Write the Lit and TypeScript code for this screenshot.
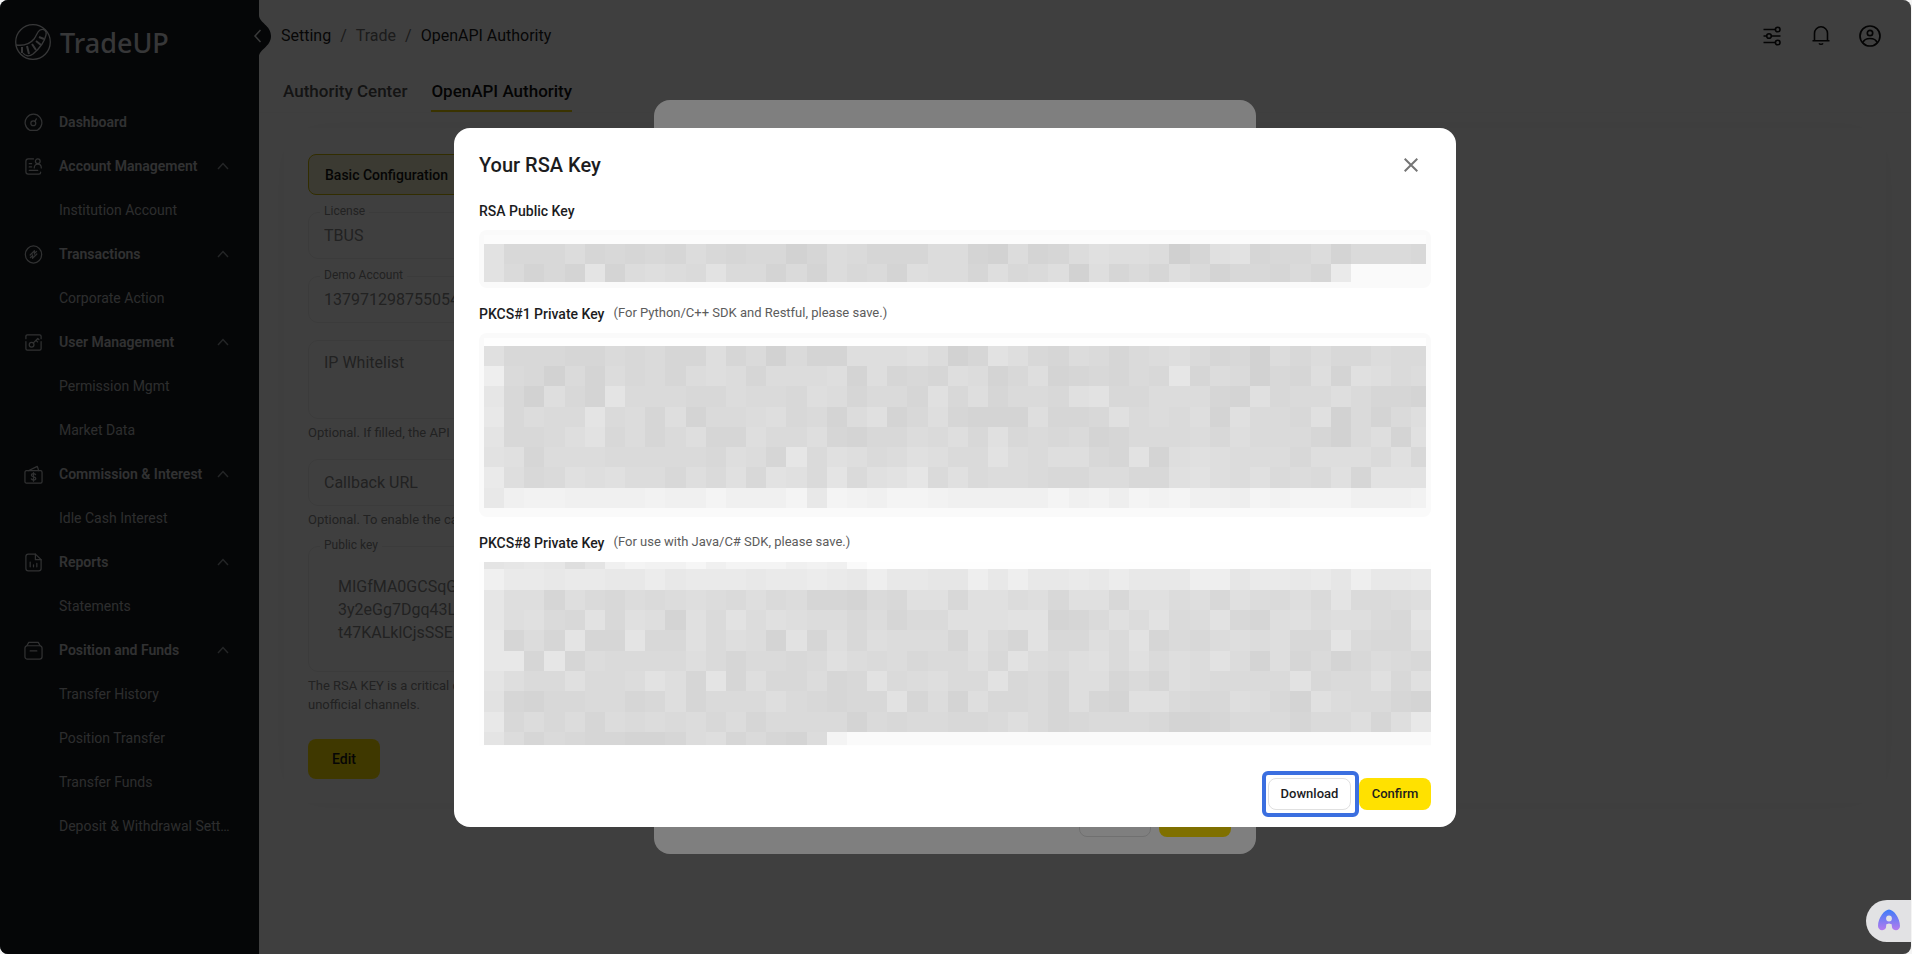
import { LitElement, html, css, svg, nothing } from "lit";
import { customElement, property } from "lit/decorators.js";

const sharedStyles = css`
  *,
  *::before,
  *::after {
    box-sizing: border-box;
  }
  button,
  input,
  textarea {
    font: inherit;
    color: inherit;
    margin: 0;
  }
  a {
    color: inherit;
    text-decoration: none;
  }
`;

const strokeIcon = (size: number, shape: unknown) => html`
  <svg
    width=${size}
    height=${size}
    viewBox="0 0 20 20"
    fill="none"
    stroke="currentColor"
    stroke-width="1.3"
    stroke-linecap="round"
    stroke-linejoin="round"
    aria-hidden="true"
  >
    ${shape}
  </svg>
`;

const glyphs: Record<string, unknown> = {
  dashboard: svg`<path d="M6 18.2A8.8 9 0 1 1 14 18.2Z"/><circle cx="9.8" cy="10.8" r="2.6"/><path d="M11.5 8.8 13 6.2"/>`,
  account: svg`<path d="M10 2H4.5A2.5 2.5 0 0 0 2 4.5v11A2.5 2.5 0 0 0 4.5 18h11a2 2 0 0 0 2-2"/><circle cx="14.5" cy="4.5" r="2.5"/><path d="M10.8 11.5c0-2.6 1.5-4 3.7-4s3.7 1.4 3.7 4M5.5 7H8M5.5 10.5H8M5.5 14h9"/>`,
  transactions: svg`<ellipse cx="10" cy="10" rx="8.6" ry="9"/><path d="M6.5 10.5 11 6v3.5M13.5 9.5 9 14v-3.5M6.8 13.3l1.4-1.4M13.2 6.7l-1.4 1.4"/>`,
  user: svg`<path d="M2 6V3.5C2 2.6 2.6 2 3.5 2h13c.9 0 1.5.6 1.5 1.5V6M2 9v7.5c0 .9.6 1.5 1.5 1.5h13c.9 0 1.5-.6 1.5-1.5V9"/><circle cx="8" cy="12.3" r="2.5"/><path d="m9.9 10.4 4.6-4.6M12.6 7.7l1.7 1.7M14.5 5.8l1.2 1.2"/>`,
  commission: svg`<rect x="1" y="6" width="18" height="13" rx="1.5"/><path d="M4.5 6 14 1.5 15.5 6"/><path d="M12.2 10.2c-.4-.7-1.2-1-2.2-1-1.2 0-2.2.6-2.2 1.6 0 2.3 4.6 1.1 4.6 3.4 0 1-1 1.6-2.3 1.6-1.1 0-2-.4-2.4-1.2M10 8v9"/>`,
  reports: svg`<path d="M12 1.2H4.5A2.5 2.5 0 0 0 2 3.7v12.6a2.5 2.5 0 0 0 2.5 2.5h11a2.5 2.5 0 0 0 2.5-2.5V7Z"/><path d="M12 1.2V7h6M6.5 9.5v5M10 12.5v2M13.5 11v3.5"/>`,
  funds: svg`<rect x="1" y="5" width="18" height="14" rx="2.5"/><path d="M3 5l2-3.5h10L17 5M6.5 10.5h7"/>`,
};

interface NavGroup {
  label: string;
  icon: string;
  children: string[];
}

const navGroups: NavGroup[] = [
  { label: "Dashboard", icon: "dashboard", children: [] },
  { label: "Account Management", icon: "account", children: ["Institution Account"] },
  { label: "Transactions", icon: "transactions", children: ["Corporate Action"] },
  { label: "User Management", icon: "user", children: ["Permission Mgmt", "Market Data"] },
  { label: "Commission & Interest", icon: "commission", children: ["Idle Cash Interest"] },
  { label: "Reports", icon: "reports", children: ["Statements"] },
  {
    label: "Position and Funds",
    icon: "funds",
    children: [
      "Transfer History",
      "Position Transfer",
      "Transfer Funds",
      "Deposit & Withdrawal Sett…",
    ],
  },
];

@customElement("side-nav")
export class SideNav extends LitElement {
  static styles = [
    sharedStyles,
    css`
      :host {
        display: flex;
        flex-direction: column;
        position: relative;
        flex: 0 0 259px;
        min-width: 0;
        background: #14191e;
        color: #c4c6c8;
      }
      .logo {
        display: flex;
        align-items: center;
        gap: 8px;
        height: 100px;
        padding: 0 0 16px 15px;
        color: #dcdee0;
      }
      .wordmark {
        padding-top: 2px;
        font: 500 27px/36px "Noto Sans", sans-serif;
      }
      .row {
        display: flex;
        align-items: center;
        width: 100%;
        height: 44px;
        padding: 0 24px;
        border: 0;
        background: none;
        font-size: 14px;
        line-height: 20px;
        text-align: left;
      }
      .group {
        gap: 16px;
        font-weight: 600;
      }
      .group svg {
        flex: none;
      }
      .text {
        flex: 1;
        white-space: nowrap;
      }
      .child {
        padding-left: 59px;
        color: #b4b6b8;
      }
      .group .chevron {
        color: #92969a;
        margin: 0 6px 0 -16px;
      }
      .collapse {
        position: absolute;
        left: 250px;
        top: 15px;
        width: 22px;
        height: 42px;
        padding: 0;
        border: 0;
        background: none;
        color: #e8e8e8;
      }
      .collapse svg {
        display: block;
      }
    `,
  ];

  render() {
    return html`
      <div class="logo">
        <svg width="37" height="38" viewBox="0 0 37 38" fill="none" stroke="currentColor" stroke-width="1.3" aria-hidden="true">
          <circle cx="18" cy="19" r="17.3" />
          <path d="M1 22c8 1 14-1 18-6 3-4 3-7 6-9 4-2 7 1 6 5-2 9-7 14-13 19-4 3-8 2-10-1" />
          <path d="M24 14l5 2M21 18l5 4M17 21l4 6M12 23l2 8M7 24v6" stroke-width="2" />
        </svg>
        <span class="wordmark">TradeUP</span>
      </div>
      <nav aria-label="Main">
        ${navGroups.map(
          (group) => html`
            <button class="row group" type="button">
              ${strokeIcon(19, glyphs[group.icon])}
              <span class="text">${group.label}</span>
              ${group.children.length
                ? html`<svg class="chevron" width="12" height="12" viewBox="0 0 12 12" fill="none" stroke="currentColor" stroke-width="1.4" aria-hidden="true">
                    <path d="M1 9l5-5.5L11 9" />
                  </svg>`
                : nothing}
            </button>
            ${group.children.map(
              (child) => html`<a class="row child" href="#"><span class="text">${child}</span></a>`,
            )}
          `,
        )}
      </nav>
      <button class="collapse" type="button" aria-label="Collapse menu">
        <svg width="22" height="42" viewBox="0 0 22 42" aria-hidden="true">
          <path d="M9 0c0 8 12 10 12 21S9 34 9 42Z" fill="#14191e" />
          <path d="M10.5 15 5 21l5.5 6" fill="none" stroke="currentColor" stroke-width="1.5" />
        </svg>
      </button>
    `;
  }
}

@customElement("page-header")
export class PageHeader extends LitElement {
  static styles = [
    sharedStyles,
    css`
      :host {
        display: block;
        border-bottom: 1px solid #fafafa;
        color: #1c1c1c;
      }
      .top {
        display: flex;
        justify-content: space-between;
        align-items: center;
        height: 72px;
        padding: 0 29px 0 22px;
        font-size: 16px;
        line-height: 24px;
      }
      .crumbs {
        display: flex;
        gap: 9px;
      }
      .dim {
        color: #707070;
      }
      .actions {
        display: flex;
        gap: 25px;
      }
      .actions button {
        display: flex;
        padding: 0;
        border: 0;
        background: none;
      }
      .tabs {
        display: flex;
        gap: 24px;
        padding: 0 24px;
      }
      .tab {
        height: 40px;
        padding: 7px 0 0;
        border-bottom: 2px solid transparent;
        font-size: 17px;
        line-height: 24px;
        font-weight: 500;
        color: #505050;
      }
      .tab.active {
        color: #101010;
        border-color: #e8cc00;
      }
    `,
  ];

  render() {
    return html`
      <div class="top">
        <div class="crumbs">
          <a href="#">Setting</a><span class="dim">/</span><a class="dim" href="#">Trade</a
          ><span class="dim">/</span><span>OpenAPI Authority</span>
        </div>
        <div class="actions">
          <button type="button" aria-label="Preferences">
            <svg width="24" height="24" viewBox="0 0 24 24" fill="none" stroke="#101010" stroke-width="1.6" aria-hidden="true">
              <path d="M3.5 5.5h12M3.5 12h3M11 12h9.5M3.5 18.5h12" />
              <circle cx="17.7" cy="5.5" r="2.3" /><circle cx="9" cy="12" r="2.3" /><circle cx="17.7" cy="18.5" r="2.3" />
            </svg>
          </button>
          <button type="button" aria-label="Notifications">
            <svg width="24" height="24" viewBox="0 0 24 24" fill="none" stroke="#101010" stroke-width="1.6" aria-hidden="true">
              <path d="M3.5 16.8h17M5.5 16.8V9.3a6.5 6.5 0 0 1 13 0v7.5M10 19.3c.8 1.3 3.2 1.3 4 0" />
            </svg>
          </button>
          <button type="button" aria-label="Profile">
            <svg width="24" height="24" viewBox="0 0 24 24" fill="none" stroke="#101010" stroke-width="1.7" aria-hidden="true">
              <circle cx="12" cy="12" r="10" /><circle cx="12" cy="9" r="2.7" />
              <path d="M5 18.5c1-3 4-4 7-4s6 1 7 4" />
            </svg>
          </button>
        </div>
      </div>
      <div class="tabs">
        <a class="tab" href="#">Authority Center</a>
        <a class="tab active" href="#" aria-current="page">OpenAPI Authority</a>
      </div>
    `;
  }
}

@customElement("config-form")
export class ConfigForm extends LitElement {
  static styles = [
    sharedStyles,
    css`
      :host {
        display: block;
        margin: 15px 25px 0;
        padding: 26px 24px 24px;
        border-radius: 24px;
        background: #fff;
        box-shadow: 0 0 44px rgba(0, 0, 0, 0.04);
        font-size: 16px;
        line-height: 23px;
        color: #888;
      }
      .section {
        display: block;
        height: 41px;
        padding: 0 16px;
        border: 1px solid #c8b400;
        border-radius: 8px;
        background: #ecebc8;
        color: #141414;
        font-size: 14px;
        line-height: 20px;
        font-weight: 500;
      }
      .field {
        position: relative;
        display: flex;
        margin-top: 17px;
        border: 1px solid #ececec;
        border-radius: 10px;
        max-width: 920px;
      }
      .field label {
        position: absolute;
        top: -11px;
        left: 11px;
        padding: 0 4px;
        background: #fff;
        font-size: 12px;
        line-height: 18px;
      }
      input,
      textarea {
        display: block;
        flex: 1;
        min-width: 0;
        height: 45px;
        padding: 0 15px 1px;
        border: 0;
        outline: 0;
        resize: none;
        overflow: hidden;
        background: none;
      }
      ::placeholder {
        color: #888;
        opacity: 1;
      }
      .whitelist {
        height: 77px;
        padding-top: 10px;
      }
      .key {
        height: 124px;
        padding: 28px 29px 0;
      }
      .hint {
        margin: 0;
        padding-top: 4px;
        font-size: 13px;
        line-height: 19px;
      }
      .edit {
        width: 72px;
        height: 40px;
        margin-top: 25px;
        border: 0;
        border-radius: 8px;
        background: #ffe100;
        color: #181818;
        font-size: 14px;
        font-weight: 500;
      }
    `,
  ];

  render() {
    return html`
      <button class="section" type="button">Basic Configuration</button>
      <div class="field">
        <label for="license">License</label>
        <input id="license" value="TBUS" readonly />
      </div>
      <div class="field">
        <label for="demo">Demo Account</label>
        <input id="demo" value="137971298755054" readonly />
      </div>
      <div class="field">
        <textarea class="whitelist" aria-label="IP Whitelist" placeholder="IP Whitelist"></textarea>
      </div>
      <p class="hint">Optional. If filled, the API</p>
      <div class="field">
        <input aria-label="Callback URL" placeholder="Callback URL" />
      </div>
      <p class="hint">Optional. To enable the ca</p>
      <div class="field">
        <label for="publicKey">Public key</label>
        <textarea
          id="publicKey"
          class="key"
          readonly
          .value=${"MIGfMA0GCSqG\n3y2eGg7Dgq43L\nt47KALklCjsSSE"}
        ></textarea>
      </div>
      <p class="hint">The RSA KEY is a critical c<br />unofficial channels.</p>
      <button class="edit" type="button">Edit</button>
    `;
  }
}

/* Each character is a base-36 grey level: 208 + 2 * level. */
const publicRows = [
  "94446343436434413653336" + "621623687760389344625554",
  "95242a26765955252645276" + "6374571735375244353dllll",
];

const pkcs1Rows = [
  "84443354533735152277786" + "139743653567534164644655",
  "f5415264536763666727343" + "76247234354b365143728756",
  "b41742a5554465547635538" + "473554894466632845575332",
  "c4655a56372556745268247" + "322273348565728554815257",
  "a4457946357337557324465" + "748454523555647555315728",
  "983666555554763b5875687" + "559657743927876664777584",
  "d7458786647584985a589b5" + "856654466448976856583999",
  "cghhgggghggigggicihgiih" + "gggggighfihiggfihiiigggh",
];

const pkcs8Rows = [
  "abcb7agihhjgiiighgl".padEnd(47, "n"),
  "gddcddccecdddcddedcfccb" + "bfcfccdcecccffbddcdbfccd",
  "b7737546567657563325488" + "4886748848867486575a5567",
  "b7854948728596876646355" + "88899235869569437867754a",
  "c363a33a448576293747666" + "3853944759354676744a5448",
  "cc3b3655557535545865645" + "574965785857696273524654",
  "a7558556973a37446349567" + "559453773537655559455848",
  "93244553473555754344936" + "274453732885447642865532",
  "c4646365656463555525455" + "44575345554223555355737c",
  "a6354332236735326i".padEnd(47, "l"),
];

@customElement("pixel-mask")
export class PixelMask extends LitElement {
  @property({ attribute: false }) rows: string[] = [];
  @property({ attribute: false }) heights: number[] = [];
  @property({ type: Number }) span = 942;

  static styles = css`
    :host {
      display: block;
    }
    svg {
      display: block;
      width: 100%;
    }
  `;

  render() {
    const cell = 20.16;
    const total = this.heights.reduce((sum, h) => sum + h, 0);
    let top = 0;
    const cells = this.rows.map((row, r) => {
      const y = top;
      top += this.heights[r];
      return [...row].map((ch, c) => {
        const g = 208 + 2 * parseInt(ch, 36);
        const x = Math.round(c * cell);
        const width = Math.round((c + 1) * cell) - x;
        return svg`<rect x=${x} y=${y} width=${width} height=${this.heights[r]} fill=${`rgb(${g},${g},${g})`}></rect>`;
      });
    });
    return html`<svg
      height=${total}
      viewBox="0 0 ${this.span} ${total}"
      preserveAspectRatio="none"
      shape-rendering="crispEdges"
      role="img"
      aria-label="Hidden key"
    >
      ${cells}
    </svg>`;
  }
}

@customElement("rsa-dialog")
export class RsaDialog extends LitElement {
  static styles = [
    sharedStyles,
    css`
      :host {
        display: block;
        box-sizing: border-box;
        width: 100%;
        max-width: 1002px;
        padding: 17px 25px 10px;
        border-radius: 16px;
        background: #fff;
        color: #1c1c1e;
      }
      header {
        display: flex;
        align-items: center;
        justify-content: space-between;
      }
      h2 {
        margin: 0;
        font-size: 20px;
        line-height: 32px;
        font-weight: 500;
      }
      .close {
        display: grid;
        place-items: center;
        width: 40px;
        height: 40px;
        padding: 0;
        border: 0;
        background: none;
        color: #757575;
      }
      .caption {
        display: flex;
        align-items: center;
        gap: 9px;
        margin: 16px 0 9px;
      }
      h3 {
        margin: 0;
        font-size: 14px;
        line-height: 20px;
        font-weight: 500;
      }
      .note {
        font-size: 13px;
        line-height: 16px;
        padding-bottom: 2px;
        color: #5c5c5c;
      }
      .box {
        padding: 5px 5px 6px;
        border-radius: 8px;
        background: #fafafa;
      }
      .inner {
        padding-top: 9px;
        background: #fcfcfc;
      }
      .box.tall {
        padding-bottom: 9px;
      }
      .tall .inner {
        padding-top: 8px;
        background: #fefefe;
      }
      .box.bare {
        padding: 0 0 1px 5px;
        border-radius: 0;
        background: #fefefe;
      }
      footer {
        display: flex;
        justify-content: flex-end;
        align-items: center;
        margin-top: 25px;
      }
      .ring {
        padding: 3px 4px 3px 2px;
        border: 4px solid #3b6fe0;
        border-radius: 6px;
      }
      .action {
        display: block;
        height: 32px;
        padding: 0 10px;
        border: 0;
        border-radius: 8px;
        font-size: 13px;
        line-height: 20px;
        font-weight: 500;
        min-width: 72px;
      }
      .outline {
        min-width: 83px;
        border: 1px solid #e0e0e0;
        background: #fff;
      }
      .primary {
        background: #ffe100;
      }
    `,
  ];

  render() {
    return html`
      <header>
        <h2>Your RSA Key</h2>
        <button class="close" type="button" aria-label="Close">
          <svg width="14" height="14" viewBox="0 0 14 14" fill="none" stroke="currentColor" stroke-width="2" aria-hidden="true">
            <path d="M.7.7l12.6 12.6M13.3.7.7 13.3" />
          </svg>
        </button>
      </header>
      <div class="caption"><h3>RSA Public Key</h3></div>
      <div class="box">
        <div class="inner">
          <pixel-mask .rows=${publicRows} .heights=${[20, 18]}></pixel-mask>
        </div>
      </div>
      <div class="caption">
        <h3>PKCS#1 Private Key</h3>
        <span class="note">(For Python/C++ SDK and Restful, please save.)</span>
      </div>
      <div class="box tall">
        <div class="inner">
          <pixel-mask .rows=${pkcs1Rows} .heights=${[20, 20, 21, 20, 20, 20, 21, 20]}></pixel-mask>
        </div>
      </div>
      <div class="caption">
        <h3>PKCS#8 Private Key</h3>
        <span class="note">(For use with Java/C# SDK, please save.)</span>
      </div>
      <div class="box bare">
        <pixel-mask
          .rows=${pkcs8Rows}
          .heights=${[7, 21, 20, 20, 21, 20, 20, 21, 20, 13]}
          .span=${947}
        ></pixel-mask>
      </div>
      <footer>
        <div class="ring"><button class="action outline" type="button">Download</button></div>
        <button class="action primary" type="button">Confirm</button>
      </footer>
    `;
  }
}

@customElement("app-root")
export class AppRoot extends LitElement {
  static styles = [
    sharedStyles,
    css`
      :host {
        display: block;
        box-sizing: border-box;
        height: 100vh;
        padding-right: 1px;
        background: #f4f4f4;
        font-family: Roboto, "Liberation Sans", sans-serif;
        font-size: 14px;
      }
      .window {
        position: relative;
        display: flex;
        height: 100%;
        border-radius: 8px;
        overflow: hidden;
        background: #fff;
      }
      main {
        flex: 1;
        min-width: 0;
      }
      .backdrop {
        position: absolute;
        inset: 0;
        display: flex;
        align-items: center;
        justify-content: center;
        padding-right: 1px;
        background: rgba(0, 0, 0, 0.5);
      }
      .sheet {
        display: flex;
        align-items: flex-end;
        justify-content: flex-end;
        gap: 8px;
        width: 100%;
        max-width: 602px;
        min-height: calc(100% - 200px);
        padding: 17px 25px;
        border-radius: 16px;
        background: #fff;
      }
      .stub {
        width: 72px;
        height: 32px;
        border: 1px solid #e0e0e0;
        border-radius: 8px;
        background: #fff;
      }
      .stub.primary {
        border: 0;
        background: #ffe100;
      }
      .assistant {
        position: absolute;
        right: 0;
        bottom: 12px;
        display: flex;
        align-items: center;
        width: 45px;
        height: 42px;
        padding: 0 0 2px 12px;
        border: 0;
        border-radius: 21px 0 0 21px;
        background: #e2e2e4;
      }
    `,
  ];

  render() {
    return html`
      <div class="window">
        <side-nav></side-nav>
        <main>
          <page-header></page-header>
          <config-form></config-form>
        </main>
        <div class="backdrop">
          <div class="sheet">
            <button class="stub" type="button" aria-label="Cancel"></button>
            <button class="stub primary" type="button" aria-label="Submit"></button>
          </div>
        </div>
        <div class="backdrop">
          <rsa-dialog role="dialog" aria-label="Your RSA Key"></rsa-dialog>
        </div>
        <button class="assistant" type="button" aria-label="Assistant">
          <svg width="22" height="22" viewBox="0 0 22 22" aria-hidden="true">
            <defs>
              <linearGradient id="glow" x1="0" y1="0" x2="0" y2="1">
                <stop offset="0" stop-color="#3d7cf8" />
                <stop offset="1" stop-color="#b57bee" />
              </linearGradient>
            </defs>
            <path
              d="M11 .5C15.5.5 22 9 22 17c0 5-6.5 5.5-8 1.5L13.5 15h-5L8 18.5C6.5 22.5 0 22 0 17 0 9 6.5.5 11 .5Z"
              fill="url(#glow)"
            />
            <circle cx="11" cy="9.5" r="2.9" fill="#e2e2e4" />
            <path d="M8.5 22c0-4-.5-7.5 2.5-7.5s2.5 3.5 2.5 7.5Z" fill="#e2e2e4" />
          </svg>
        </button>
      </div>
    `;
  }
}
